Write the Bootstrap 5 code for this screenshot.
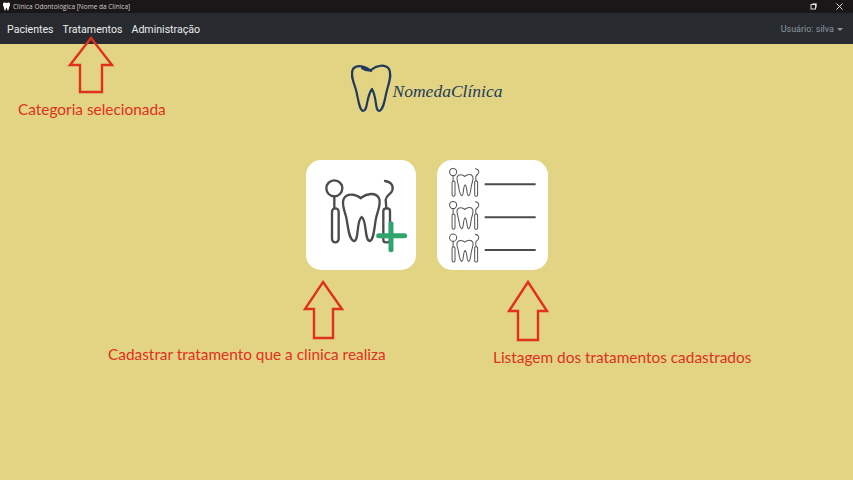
<!DOCTYPE html>
<html lang="pt-BR">
<head>
    <meta charset="UTF-8">
    <title>Clínica Odontológica [Nome da Clínica]</title>
    <link href="https://cdn.jsdelivr.net/npm/bootstrap@5.3.3/dist/css/bootstrap.min.css" rel="stylesheet">
    <style>
        html, body {
            height: 100%;
        }

        body {
            background: #e2d483;
            font-family: "Open Sans", "Liberation Sans", sans-serif;
            overflow: hidden;
        }

        .win-bar {
            height: 13px;
            background: #1b1617;
            color: #cfcfcf;
            font-size: 6.5px;
            padding: 0 10px 0 2px;
            gap: 2px;
        }

        .app-nav {
            height: 31px;
            background: #272b30;
            padding: 3px 10px 0 7px;
        }

        .app-nav.navbar-expand .navbar-nav .nav-link {
            color: #ececec;
            font-family: Roboto, sans-serif;
            font-size: 10.6px;
            padding: 0;
            margin-right: 9px;
        }

        .app-nav.navbar-expand .navbar-nav .user-link {
            color: #8b959c;
            font-size: 9px;
            margin-right: 0;
        }

        .app-nav .user-link::after {
            vertical-align: 1px;
            border-top-width: 3px;
            border-left-width: 3px;
            border-right-width: 3px;
            margin-left: 3px;
        }

        .clinic-logo {
            height: 49px;
            margin-top: 20px;
        }

        .clinic-name {
            font-family: "Liberation Serif", serif;
            font-style: italic;
            font-size: 17.5px;
            line-height: 22px;
            color: #1f3a5c;
            margin: 16px 0 0 1px;
        }

        .tile-row {
            margin-top: 47px;
            gap: 21px;
        }

        .tile {
            width: 110px;
            height: 110px;
            background: #fff;
            border-radius: 15px;
        }

        .tile-wide {
            width: 111px;
        }

        .note-layer {
            position: absolute;
            inset: 0;
            pointer-events: none;
        }

        .note-text {
            position: absolute;
            color: #e0301e;
            font-family: Lato, "Liberation Sans", sans-serif;
            font-size: 15.4px;
            line-height: 18px;
            white-space: nowrap;
        }

        .note-a { left: 18px; top: 100px; }
        .note-b { left: 108px; top: 345px; }
        .note-c { left: 493px; top: 348px; }
    </style>
</head>
<body>
    <!-- Window title -->
    <div class="win-bar d-flex align-items-center">
        <svg width="9" height="9" viewBox="0 0 20 20"><path d="M3 2c3-2 5 0 7 0s4-2 7 0c2 3 0 7-1 9-1 3-1 8-3 8s-1-6-3-6-1 6-3 6-2-5-3-8C3 9 1 5 3 2z" fill="#fff"/></svg>
        <span>Clínica Odontológica [Nome da Clínica]</span>
        <div class="ms-auto d-flex align-items-center">
            <svg width="7" height="7" viewBox="0 0 7 7"><rect x="1" y="1.5" width="4.5" height="4.5" fill="none" stroke="#ddd"/><path d="M2.5 .5h4v4" fill="none" stroke="#999"/></svg>
            <svg width="7" height="7" viewBox="0 0 7 7" style="margin-left:19px"><path d="M.5.5l6 6M6.5.5l-6 6" stroke="#ddd"/></svg>
        </div>
    </div>

    <!-- Main nav -->
    <nav class="navbar navbar-expand navbar-dark app-nav">
        <ul class="navbar-nav">
            <li class="nav-item"><a class="nav-link" href="#">Pacientes</a></li>
            <li class="nav-item"><a class="nav-link" href="#">Tratamentos</a></li>
            <li class="nav-item"><a class="nav-link" href="#">Administração</a></li>
        </ul>
        <ul class="navbar-nav ms-auto">
            <li class="nav-item dropdown"><a class="nav-link user-link dropdown-toggle" href="#">Usuário: silva</a></li>
        </ul>
    </nav>

    <!-- Shared drawing of the tools -->
    <svg width="0" height="0" class="d-block">
        <defs>
            <g id="toolset" fill="none" stroke-linecap="round" stroke-linejoin="round">
                <circle cx="103" cy="100" r="24"/>
                <path d="M103 124v36"/>
                <rect x="96" y="160" width="20" height="102" rx="10"/>
                <path d="M183 130c-14-12-42-18-52 2-7 16 3 36 8 56 5 24 7 68 24 70 14-2 6-62 22-72 16 10 8 70 24 72 14-2 14-50 20-72 5-20 15-40 8-56-10-20-36-14-54-2"/>
                <path d="M255 78c18 2 26 14 22 28-4 12-18 14-20 28l2 26"/>
                <rect x="250" y="160" width="20" height="102" rx="8"/>
            </g>
        </defs>
    </svg>

    <main class="d-flex flex-column align-items-center">
        <div class="clinic-logo d-flex align-items-start">
            <svg width="41" height="49" viewBox="0 0 41 49">
                <path d="M20 7C15 2 6 0 2 5c-3 6 1 14 3 21 2 7 3 20 7 21 5 0 3-14 9-22 5 8 3 22 7 22 5-1 6-14 8-21 2-7 5-15 2-21-4-5-12-4-18 1-3 1-6 0-9-2" fill="none" stroke="#1f3a5c" stroke-width="2.2" stroke-linecap="round" stroke-linejoin="round"/>
            </svg>
            <div class="clinic-name">NomedaClínica</div>
        </div>

        <div class="tile-row d-flex">
            <a class="tile d-block" href="#">
                <svg width="110" height="110" viewBox="18 15 330 330">
                    <use href="#toolset" stroke="#4b4b4d" stroke-width="7"/>
                    <path d="M236 242h78M273 206v78" stroke="#2fa56d" stroke-width="15" stroke-linecap="round"/>
                </svg>
            </a>
            <a class="tile tile-wide d-block" href="#">
                <svg width="110" height="110" viewBox="22 15 330 330">
                    <use href="#toolset" stroke="#55565a" stroke-width="7" transform="translate(25 6) scale(.44 .45)"/>
                    <use href="#toolset" stroke="#55565a" stroke-width="7" transform="translate(25 105) scale(.44 .45)"/>
                    <use href="#toolset" stroke="#55565a" stroke-width="7" transform="translate(25 203) scale(.44 .45)"/>
                    <path d="M165 88h153M165 187h153M165 285h153" stroke="#4b4b4d" stroke-width="6"/>
                </svg>
            </a>
        </div>
    </main>

    <!-- Red notes over the screen -->
    <div class="note-layer">
        <svg width="853" height="480" class="d-block">
            <g fill="none" stroke="#e0301e" stroke-width="2.4">
                <path d="M91 38l21 27h-10v27H80V65H70z"/>
                <path d="M323 282l19 27h-9v29h-19v-29h-9z"/>
                <path d="M528 282l19 29h-9v29h-20v-29h-9z"/>
            </g>
        </svg>
        <div class="note-text note-a">Categoria selecionada</div>
        <div class="note-text note-b">Cadastrar tratamento que a clinica realiza</div>
        <div class="note-text note-c">Listagem dos tratamentos cadastrados</div>
    </div>

    <script src="https://cdn.jsdelivr.net/npm/bootstrap@5.3.3/dist/js/bootstrap.bundle.min.js"></script>
</body>
</html>
